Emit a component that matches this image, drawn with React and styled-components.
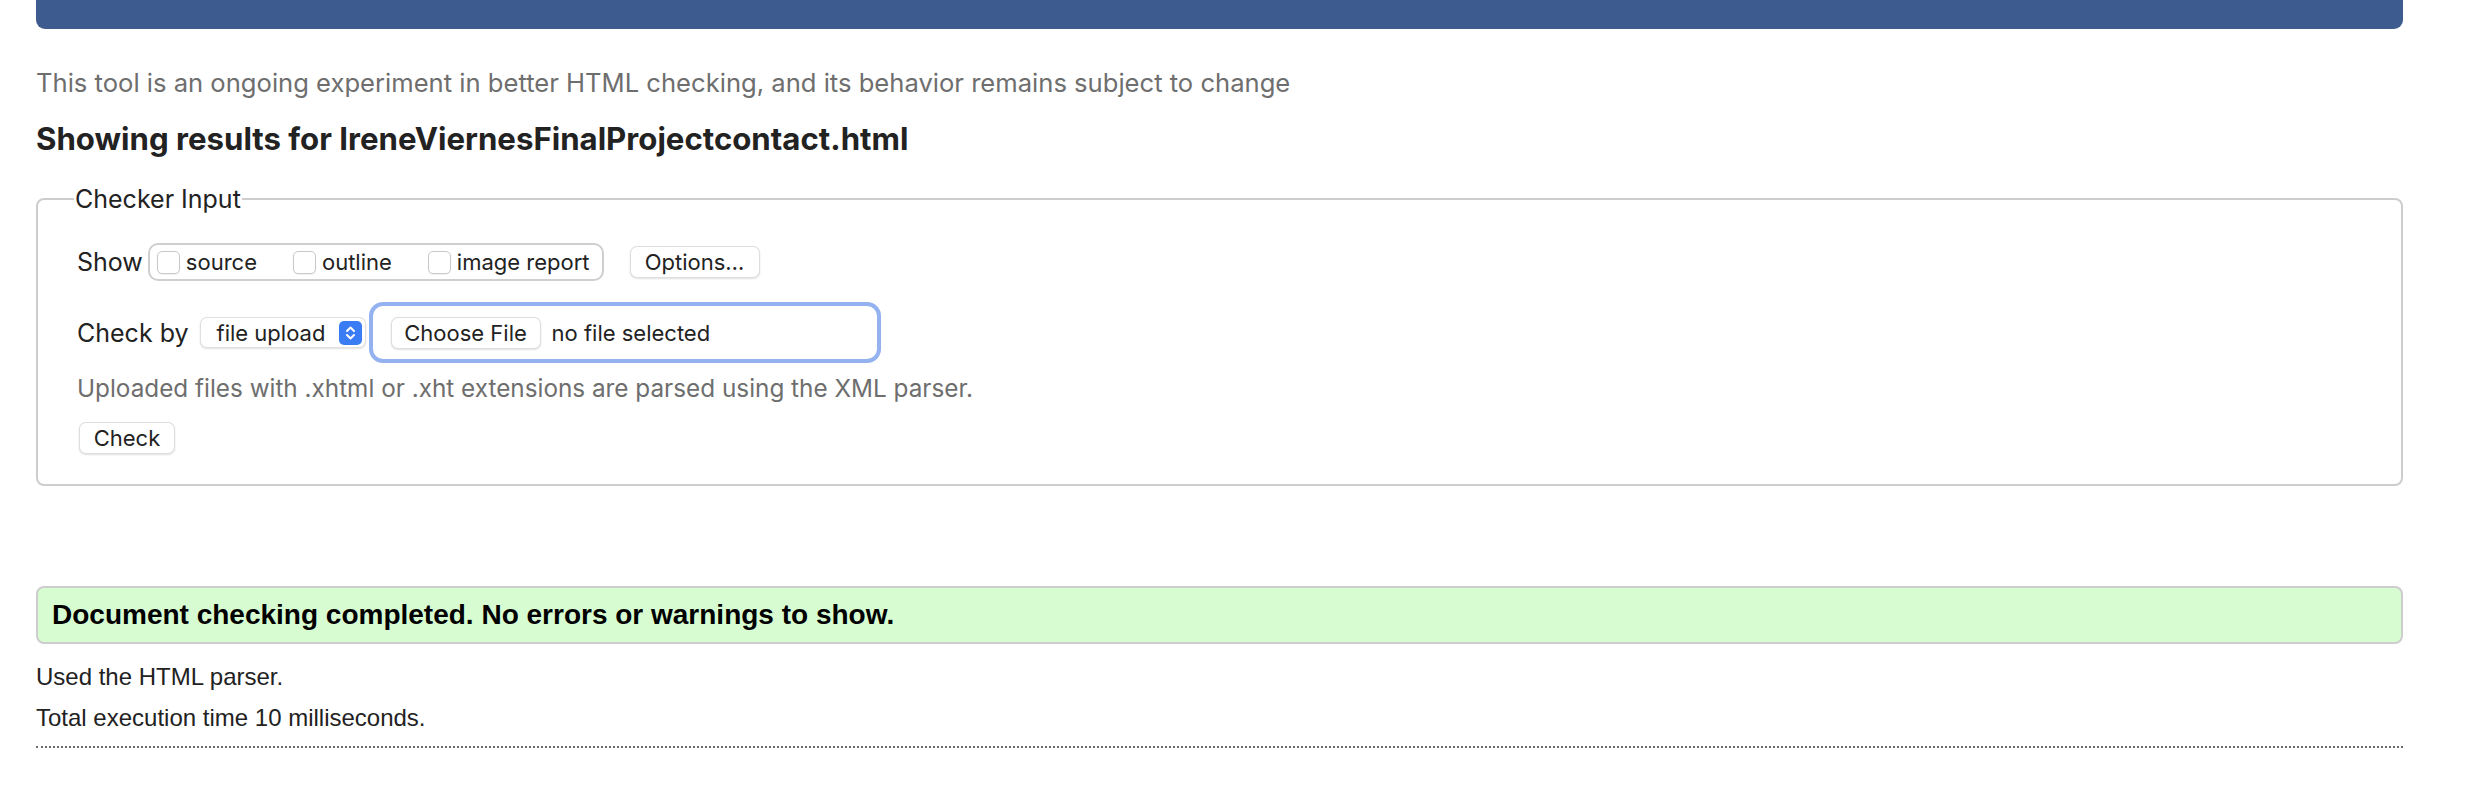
import React from 'react';
import styled, { createGlobalStyle } from 'styled-components';

const Global = createGlobalStyle`
  html, body { margin: 0; padding: 0; background: #fff; }
  body { font-family: Inter, "Noto Sans", sans-serif; color: #222; }
  * { box-sizing: border-box; }
`;

const Page = styled.div`
  padding: 0 63px 40px 36px;
`;

const Header = styled.header`
  height: 29px;
  background: #3e5b8f;
  border-radius: 0 0 9px 9px;
`;

const Intro = styled.p`
  margin: 39px 0 0;
  font-size: 25.6px;
  line-height: 30px;
  color: #6e6e6e;
`;

const Title = styled.h2`
  margin: 23px 0 0;
  font-size: 31.2px;
  line-height: 37px;
  font-weight: 700;
  color: #222;
`;

const Fieldset = styled.fieldset`
  margin: 27px 0 0;
  border: 2px solid #cdcdcd;
  border-radius: 8px;
  padding: 30px 24px 30px 39px;
  min-width: 0;
`;

const Legend = styled.legend`
  margin-left: -3px;
  padding: 0 1px;
  font-size: 25px;
  line-height: 28px;
  color: #222;
`;

const Row = styled.div`
  display: flex;
  align-items: center;
  margin-top: ${p => p.$top || 0}px;
`;

const FieldLabel = styled.span`
  font-size: 25px;
  line-height: 30px;
  color: #222;
  margin-right: ${p => p.$gap || 0}px;
`;

const CheckGroup = styled.div`
  display: flex;
  align-items: center;
  gap: 36px;
  height: 38px;
  padding: 0 12px 0 7px;
  border: 2px solid #cfcfcf;
  border-radius: 10px;
`;

const CheckItem = styled.label`
  display: flex;
  align-items: center;
  gap: 6px;
  font-size: 22px;
  color: #222;
`;

const Checkbox = styled.input.attrs({ type: 'checkbox' })`
  appearance: none;
  margin: 0;
  width: 23px;
  height: 23px;
  background: #fff;
  border: 1px solid #c9c9c9;
  border-radius: 5px;
  box-shadow: 0 1px 1px rgba(0, 0, 0, 0.06);
`;

const Button = styled.button`
  height: 32px;
  width: ${p => p.$w}px;
  margin-left: ${p => p.$ml || 0}px;
  padding: 0;
  background: #fff;
  border: 1px solid rgba(0, 0, 0, 0.13);
  border-radius: 7px;
  box-shadow: 0 1px 2px rgba(0, 0, 0, 0.12);
  font-family: Inter, "Noto Sans", sans-serif;
  font-size: 22px;
  color: #222;
`;

const Select = styled.div`
  position: relative;
  display: flex;
  align-items: center;
  width: 166px;
  height: 31px;
  padding-left: 16px;
  background: #fff;
  border: 1px solid rgba(0, 0, 0, 0.12);
  border-radius: 7px;
  box-shadow: 0 1px 2px rgba(0, 0, 0, 0.12);
  font-size: 22px;
  color: #222;
`;

const Stepper = styled.span`
  position: absolute;
  right: 3px;
  top: 3px;
  width: 23px;
  height: 24px;
  border-radius: 5px;
  background: #3a7cf4;
  display: flex;
  align-items: center;
  justify-content: center;
`;

const FileBox = styled.div`
  display: flex;
  align-items: center;
  gap: 11px;
  width: 512px;
  height: 61px;
  margin-left: 3px;
  padding: 0 18px;
  border: 4px solid #93b2ef;
  border-radius: 14px;
  font-size: 22px;
  color: #222;
`;

const Hint = styled.p`
  margin: 10px 0 0;
  font-size: 24.3px;
  line-height: 30px;
  color: #6e6e6e;
`;

const Success = styled.div`
  display: flex;
  align-items: center;
  height: 58px;
  margin-top: 100px;
  padding: 0 14px;
  background: #d8fcd1;
  border: 2px solid #cdcdcd;
  border-radius: 8px;
  font-family: "Liberation Sans", Arial, sans-serif;
  font-weight: 700;
  font-size: 28px;
  color: #000;
`;

const Note = styled.p`
  margin: ${p => p.$top}px 0 0;
  font-family: "Liberation Sans", Arial, sans-serif;
  font-size: 24px;
  line-height: 28px;
  color: #222;
`;

const Divider = styled.hr`
  margin: 14px 0 0;
  border: 0;
  border-top: 2px dotted #6a6a6a;
`;

export default function App() {
  return (
    <>
      <Global />
      <Page>
        <Header />
        <Intro>This tool is an ongoing experiment in better HTML checking, and its behavior remains subject to change</Intro>
        <Title>Showing results for IreneViernesFinalProjectcontact.html</Title>
        <Fieldset>
          <Legend>Checker Input</Legend>
          <Row>
            <FieldLabel $gap={5}>Show</FieldLabel>
            <CheckGroup>
              <CheckItem><Checkbox />source</CheckItem>
              <CheckItem><Checkbox />outline</CheckItem>
              <CheckItem><Checkbox />image report</CheckItem>
            </CheckGroup>
            <Button $w={130} $ml={26}>Options…</Button>
          </Row>
          <Row $top={21}>
            <FieldLabel $gap={11}>Check by</FieldLabel>
            <Select>
              file upload
              <Stepper>
                <svg width="11" height="16" viewBox="0 0 11 16" fill="none" stroke="#fff" strokeWidth="2" strokeLinecap="round" strokeLinejoin="round">
                  <path d="M2 6l3.5-3.5L9 6" />
                  <path d="M2 10l3.5 3.5L9 10" />
                </svg>
              </Stepper>
            </Select>
            <FileBox>
              <Button $w={150}>Choose File</Button>
              no file selected
            </FileBox>
          </Row>
          <Hint>Uploaded files with .xhtml or .xht extensions are parsed using the XML parser.</Hint>
          <Row $top={19}>
            <Button $w={96} $ml={2}>Check</Button>
          </Row>
        </Fieldset>
        <Success>Document checking completed. No errors or warnings to show.</Success>
        <Note $top={19}>Used the HTML parser.</Note>
        <Note $top={13}>Total execution time 10 milliseconds.</Note>
        <Divider />
      </Page>
    </>
  );
}
